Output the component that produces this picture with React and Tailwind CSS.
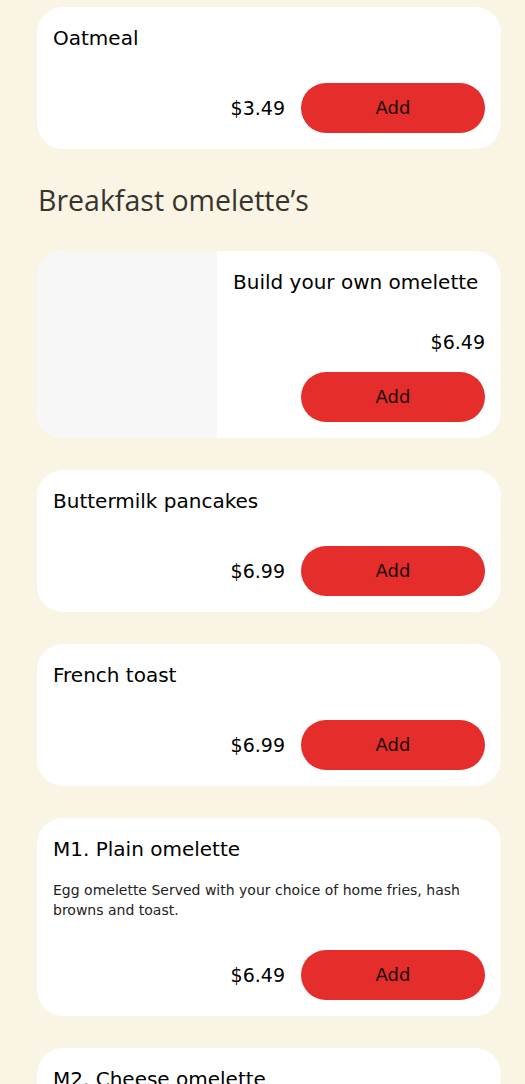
import React from 'react';

const items = [
    { name: 'Oatmeal', price: '$3.49' },
];

const omelettes = [
    { name: 'Buttermilk pancakes', price: '$6.99' },
    { name: 'French toast', price: '$6.99' },
    { name: 'M1. Plain omelette', price: '$6.49', desc: 'Egg omelette Served with your choice of home fries, hash browns and toast.' },
    { name: 'M2. Cheese omelette', price: '$6.99', desc: 'Cheese omelette Served with your choice of home fries, hash browns and toast.' },
];

const AddButton = () => (
    <button className="w-[184px] h-[50px] rounded-full bg-[#e52d2b] text-[#1a0a0a] text-[18px] leading-none">
        Add
    </button>
);

const MenuCard = ({ item }) => (
    <div className="bg-white rounded-[26px] p-4">
        <h3 className="text-[20px] leading-[30px] text-black">{item.name}</h3>
        {item.desc && (
            <p className="mt-4 text-[14px] leading-[20px] text-[#222]">{item.desc}</p>
        )}
        <div className="mt-[30px] flex items-center justify-end gap-4">
            <span className="text-[19px] text-black">{item.price}</span>
            <AddButton />
        </div>
    </div>
);

const App = () => {
    return (
        <div className="min-h-screen bg-[#faf4e5] pl-[37px] pr-[24px] pt-[7px] pb-10 flex flex-col gap-8" style={{ fontFamily: '"DejaVu Sans", sans-serif' }}>
            {items.map((item) => (
                <MenuCard key={item.name} item={item} />
            ))}

            <h2 className="my-[2px] text-[28.5px] leading-[34px] text-[#36342b] pl-px" style={{ fontFamily: '"Open Sans", sans-serif' }}>
                Breakfast omelette’s
            </h2>

            {/* Card with image slot */}
            <div className="bg-white rounded-[26px] overflow-hidden flex">
                <div className="w-[180px] shrink-0 bg-[#f7f7f7]" />
                <div className="flex-1 p-4 flex flex-col items-end">
                    <h3 className="self-start text-[20px] leading-[30px] text-black whitespace-nowrap">Build your own omelette</h3>
                    <span className="mt-[30px] text-[19px] leading-[30px] text-black">$6.49</span>
                    <div className="mt-[15px]">
                        <AddButton />
                    </div>
                </div>
            </div>

            {omelettes.map((item) => (
                <MenuCard key={item.name} item={item} />
            ))}
        </div>
    );
};

export default App;
